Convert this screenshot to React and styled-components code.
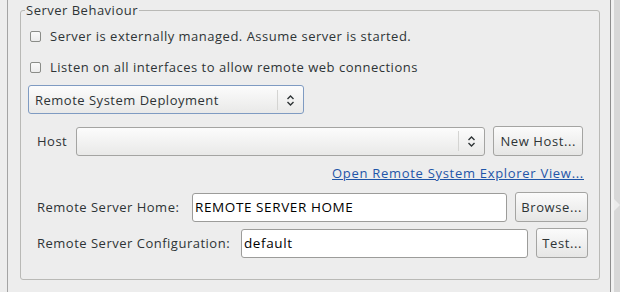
import React from 'react'
import styled, { createGlobalStyle } from 'styled-components'

const Global = createGlobalStyle`
  html, body { margin: 0; padding: 0; }
  body {
    background: #ededed;
    font-family: "Open Sans", "DejaVu Sans", sans-serif;
    font-size: 13px;
    letter-spacing: 0.5px;
    color: #2e3436;
  }
`

function Chevrons() {
  return (
    <svg width="9" height="13" viewBox="0 0 9 13">
      <polyline points="1.5,5 4.5,2 7.5,5" fill="none" stroke="#2e3436" strokeWidth="1.4" />
      <polyline points="1.5,8 4.5,11 7.5,8" fill="none" stroke="#2e3436" strokeWidth="1.4" />
    </svg>
  )
}

function App() {
  return (
    <Page>
      <Global />
      <LeftEdge />
      <Content>
        <Group>
          <Legend>Server Behaviour</Legend>
          <CheckRow>
            <Box />
            <span>Server is externally managed. Assume server is started.</span>
          </CheckRow>
          <CheckRow gap={9}>
            <Box />
            <span>Listen on all interfaces to allow remote web connections</span>
          </CheckRow>
          <Combo width={276} focused>
            <ComboText>Remote System Deployment</ComboText>
            <ComboArrow><Chevrons /></ComboArrow>
          </Combo>
          <FieldRow top={12} right={16}>
            <Label width={31}>Host</Label>
            <Combo as="div" grow>
              <ComboText />
              <ComboArrow><Chevrons /></ComboArrow>
            </Combo>
            <Button>New Host...</Button>
          </FieldRow>
          <LinkRow>
            <Link href="#">Open Remote System Explorer View...</Link>
          </LinkRow>
          <FieldRow top={11} right={11}>
            <Label width={147}>Remote Server Home:</Label>
            <Input defaultValue="REMOTE SERVER HOME" />
            <Button pad={5}>Browse...</Button>
          </FieldRow>
          <FieldRow top={6} right={11}>
            <Label width={196}>Remote Server Configuration:</Label>
            <Input defaultValue="default" />
            <Button pad={5}>Test...</Button>
          </FieldRow>
        </Group>
      </Content>
      <RightEdge>
        <ScrollArrow />
      </RightEdge>
    </Page>
  )
}

export default App

const Page = styled.div`
  display: flex;
  width: 620px;
  height: 292px;
  overflow: hidden;
  background: #ededed;
`

const LeftEdge = styled.div`
  width: 7px;
  flex: none;
  border-right: 1px solid #a4a4a4;
`

const Content = styled.div`
  flex: 1;
  padding: 2px 10px 0 12px;
`

const Group = styled.fieldset`
  margin: 0;
  height: 278px;
  box-sizing: border-box;
  padding: 6px 0 0 9px;
  border: 1px solid #b9b9b6;
  border-radius: 3px;
  display: flex;
  flex-direction: column;
  min-width: 0;
`

const Legend = styled.legend`
  padding: 0 1px;
  margin-left: -5px;
  line-height: 17px;
  color: #2e3436;
`

const CheckRow = styled.label`
  display: flex;
  align-items: center;
  height: 22px;
  gap: 9px;
  margin-top: ${p => p.gap || 0}px;
  white-space: nowrap;
`

const Box = styled.span`
  width: 9px;
  height: 9px;
  flex: none;
  border: 1px solid #8a8c88;
  border-radius: 2px;
  background: linear-gradient(#fafafa, #ececec);
`

const Combo = styled.button`
  display: flex;
  align-items: center;
  box-sizing: border-box;
  height: 29px;
  width: ${p => (p.width ? p.width + 'px' : 'auto')};
  flex: ${p => (p.grow ? 1 : 'none')};
  margin: ${p => (p.grow ? 0 : '7px 0 0 -2px')};
  padding: 0;
  border: 1px solid ${p => (p.focused ? '#7f9bc2' : '#a4a4a2')};
  border-radius: 3px;
  background: linear-gradient(#fcfcfc, #e9e9e8);
  font: inherit;
  letter-spacing: inherit;
  color: inherit;
  text-align: left;
`

const ComboText = styled.span`
  flex: 1;
  padding-left: 6px;
  white-space: nowrap;
`

const ComboArrow = styled.span`
  display: flex;
  align-items: center;
  justify-content: center;
  width: 25px;
  height: 19px;
  border-left: 1px solid #d4d4d2;
  padding-top: 1px;
`

const FieldRow = styled.div`
  display: flex;
  align-items: center;
  gap: 8px;
  margin-top: ${p => p.top}px;
  padding-left: 7px;
  padding-right: ${p => p.right}px;
`

const Label = styled.span`
  width: ${p => p.width}px;
  flex: none;
  white-space: nowrap;
`

const Button = styled.button`
  flex: none;
  height: 30px;
  padding: 0 ${p => p.pad || 6}px;
  border: 1px solid #a4a4a2;
  border-radius: 3px;
  background: linear-gradient(#fbfbfb, #e6e6e5);
  font: inherit;
  letter-spacing: 0.6px;
  color: #2e3436;
`

const Input = styled.input`
  flex: 1;
  min-width: 0;
  height: 29px;
  box-sizing: border-box;
  padding: 0 2px;
  border: 1px solid #9c9c9a;
  border-radius: 3px;
  background: #fff;
  font: inherit;
  font-size: 13.5px;
  letter-spacing: 0.6px;
  color: #000;
  outline: none;
`

const LinkRow = styled.div`
  display: flex;
  justify-content: flex-end;
  height: 16px;
  margin-top: 9px;
  padding-right: 15px;
  line-height: 16px;
`

const Link = styled.a`
  color: #1f55a8;
  letter-spacing: 0.7px;
  text-decoration: underline;
`

const RightEdge = styled.div`
  width: 9px;
  flex: none;
  position: relative;
  border-left: 1px solid #8e8e8e;
  box-shadow: inset 3px 0 0 #f2f2f2;
  background: #d8d8d8;
`

const ScrollArrow = styled.span`
  position: absolute;
  top: 199px;
  left: 3px;
  width: 0;
  height: 0;
  border-top: 6px solid transparent;
  border-bottom: 6px solid transparent;
  border-left: 6px solid #ececec;
`
